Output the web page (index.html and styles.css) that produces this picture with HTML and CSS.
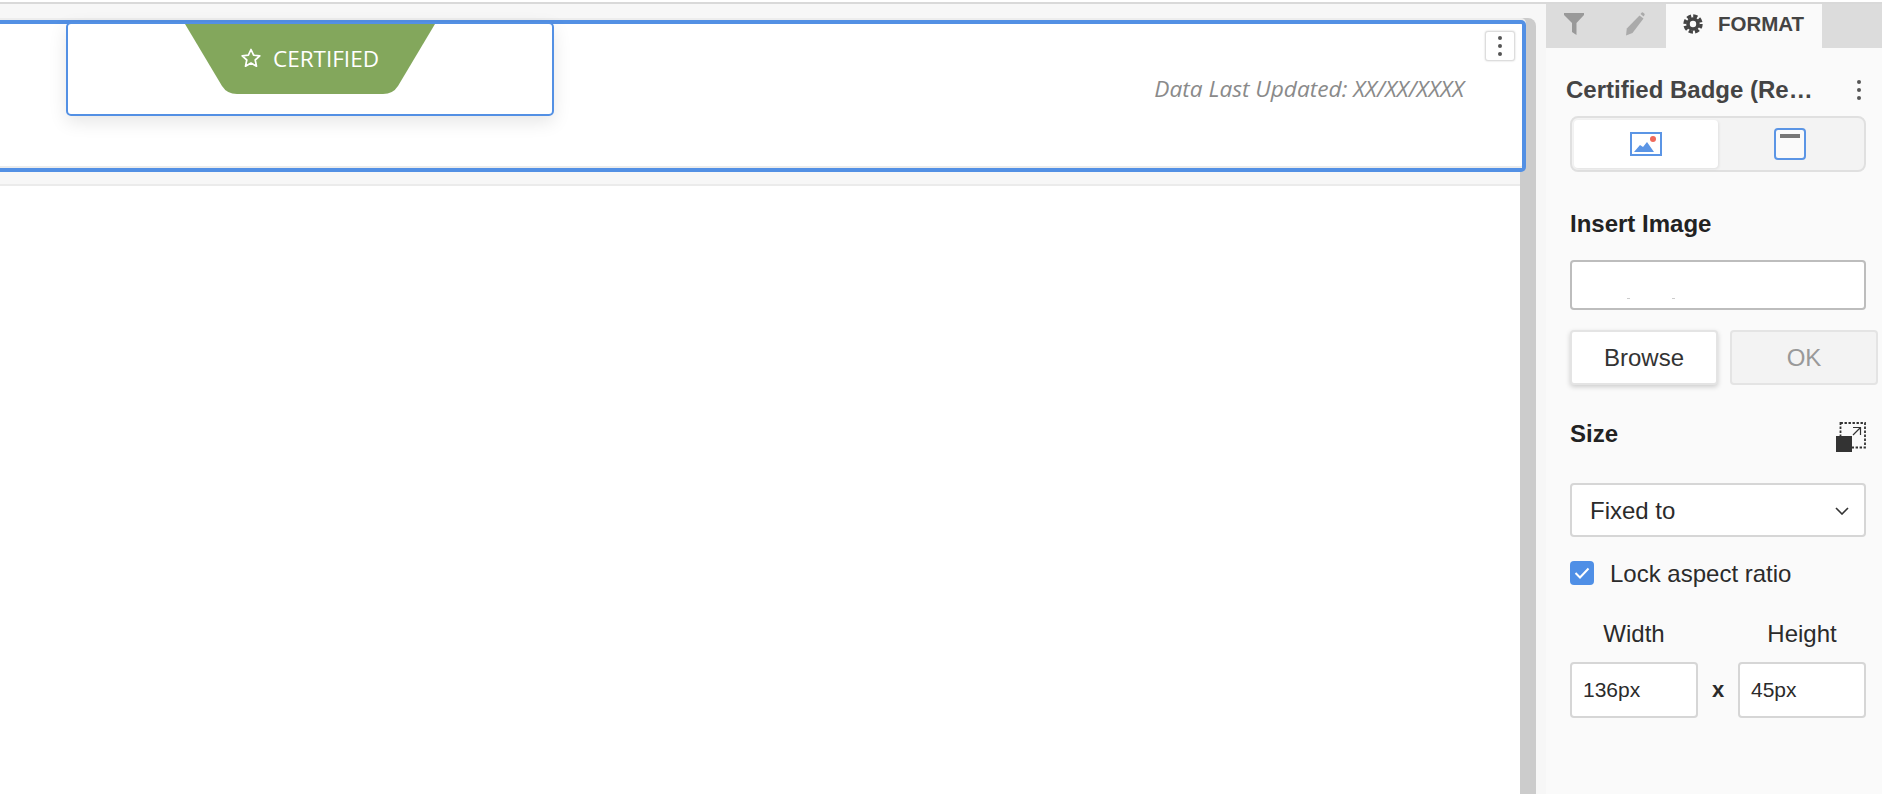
FILE: index.html
```html
<!DOCTYPE html>
<html lang="en">
<head>
    <meta charset="UTF-8">
    <meta name="viewport" content="width=device-width, initial-scale=1.0">
    <title>Certified Badge</title>
    <link rel="stylesheet" href="styles.css">
</head>
<body>
    <div class="app">
        <div class="canvas">
            <div class="page">
                <div class="section">
                    <div class="widget">
                        <div class="badge">
                            <svg class="badge-shape" width="250" height="70" viewBox="0 0 250 70">
                                <path d="M0 0H250L213 62Q208 70 198 70H52Q42 70 37 62Z" fill="#83a75c"/>
                            </svg>
                            <svg class="star" width="20" height="20" viewBox="0 0 20 20">
                                <path d="M10 1.5L12.6 7.2L18.8 7.9L14.2 12L15.5 18.2L10 15L4.5 18.2L5.8 12L1.2 7.9L7.4 7.2Z" fill="none" stroke="#fff" stroke-width="1.7" stroke-linejoin="round"/>
                            </svg>
                            <span class="badge-text">CERTIFIED</span>
                        </div>
                    </div>
                    <span class="updated">Data Last Updated: XX/XX/XXXX</span>
                    <button class="menu-btn">
                        <svg width="6" height="22" viewBox="0 0 6 22"><circle cx="3" cy="3" r="2" fill="#555"/><circle cx="3" cy="11" r="2" fill="#555"/><circle cx="3" cy="19" r="2" fill="#555"/></svg>
                    </button>
                </div>
                <div class="band"></div>
            </div>
            <div class="scrollbar"></div>
        </div>

        <div class="panel">
            <div class="tabs">
                <div class="tab tab-filter">
                    <svg width="20" height="22" viewBox="0 0 20 22"><path d="M0 0H20V2L12.5 10V22L8 19V10L0 2Z" fill="#999"/></svg>
                </div>
                <div class="tab">
                    <svg width="20" height="24" viewBox="0 0 20 24"><path d="M14.5 3.5L18.5 6.5L7.5 21L1 23.5L1.8 16.5Z" fill="#aaa"/><path d="M15.5 2L16.5 0.8Q17.2 0 18 0.6L19.5 1.8Q20 2.5 19.4 3.2L18.6 4.6Z" fill="#aaa"/></svg>
                </div>
                <div class="tab tab-active">
                    <svg width="20" height="20" viewBox="0 0 20 20"><circle cx="10" cy="10" r="5" fill="none" stroke="#444" stroke-width="3.6"/><circle cx="10" cy="10" r="8" fill="none" stroke="#444" stroke-width="3.4" stroke-dasharray="4.2 2.08"/></svg>
                    <span>FORMAT</span>
                </div>
                <div class="tab-rest"></div>
            </div>

            <div class="panel-body">
                <div class="title-row">
                    <span class="title">Certified Badge (Re…</span>
                    <svg width="6" height="22" viewBox="0 0 6 22"><circle cx="3" cy="3" r="2" fill="#555"/><circle cx="3" cy="11" r="2" fill="#555"/><circle cx="3" cy="19" r="2" fill="#555"/></svg>
                </div>

                <div class="segments">
                    <div class="segment segment-active">
                        <svg width="32" height="24" viewBox="0 0 32 24">
                            <rect x="1" y="1" width="30" height="22" fill="#fff" stroke="#5b95e5" stroke-width="2"/>
                            <path d="M4 20L10 13L13 15L17 10L24 20Z" fill="#5b95e5"/>
                            <circle cx="23" cy="7" r="3" fill="#f0695a"/>
                        </svg>
                    </div>
                    <div class="segment">
                        <svg width="32" height="32" viewBox="0 0 32 32">
                            <rect x="1" y="1" width="30" height="30" rx="3" fill="#fafafa" stroke="#5b95e5" stroke-width="2"/>
                            <rect x="6" y="6" width="20" height="4" fill="#777"/>
                        </svg>
                    </div>
                </div>

                <h3 class="heading heading-image">Insert Image</h3>
                <div class="input-box image-input"></div>
                <div class="btn-row">
                    <button class="btn">Browse</button>
                    <button class="btn btn-disabled">OK</button>
                </div>

                <div class="size-row">
                    <h3 class="heading">Size</h3>
                    <svg width="30" height="30" viewBox="0 0 30 30">
                        <rect x="4.5" y="1" width="24.5" height="24.5" fill="none" stroke="#333" stroke-width="1.8" stroke-dasharray="2.4 1.6"/>
                        <path d="M17 5.5H24.5V13M24.5 5.5L17 13" fill="none" stroke="#333" stroke-width="1.2"/>
                        <rect x="0" y="14" width="16" height="16" fill="#333"/>
                    </svg>
                </div>

                <div class="input-box select-box">
                    <span>Fixed to</span>
                    <svg width="14" height="8" viewBox="0 0 14 8"><path d="M1 1L7 7L13 1" fill="none" stroke="#333" stroke-width="1.6"/></svg>
                </div>

                <div class="check-row">
                    <span class="checkbox">
                        <svg width="16" height="12" viewBox="0 0 16 12"><path d="M1.5 6L6 10.5L14.5 1.5" fill="none" stroke="#fff" stroke-width="2"/></svg>
                    </span>
                    <span class="check-label">Lock aspect ratio</span>
                </div>

                <div class="dims-labels">
                    <span>Width</span>
                    <span>Height</span>
                </div>
                <div class="dims">
                    <div class="input-box dim-input">136px</div>
                    <span class="dim-x">x</span>
                    <div class="input-box dim-input">45px</div>
                </div>
            </div>
        </div>
    </div>
</body>
</html>
```

FILE: styles.css
```css
* {
    box-sizing: border-box;
}
body {
    margin: 0;
    height: 794px;
    overflow: hidden;
    background: #fff;
    font-family: "Liberation Sans", Arial, sans-serif;
    color: #2b2b2b;
}
.app {
    display: flex;
    height: 792px;
    margin-top: 2px;
    border-top: 2px solid #d9d9d9;
    background: #f7f7f7;
}
.canvas {
    display: flex;
    flex: 0 0 1546px;
    padding: 14px 10px 0 0;
}
.page {
    width: 1520px;
    padding-top: 2px;
    background: #fff;
    display: flex;
    flex-direction: column;
}
.section {
    position: relative;
    z-index: 1;
    width: 1526px;
    height: 152px;
    border: 4px solid #5390e4;
    border-left: none;
    border-radius: 0 5px 5px 0;
    background: #fff;
    box-shadow: inset 0 -2px 0 #ececec, 0 -2px 0 #ededed;
    display: flex;
    justify-content: flex-end;
    padding: 50px 58px 0 0;
}
.band {
    height: 14px;
    background: #f7f7f7;
    border-bottom: 2px solid #ebebeb;
}
.scrollbar {
    width: 16px;
    background: #cccccc;
    border-radius: 0 8px 0 0;
}

.widget {
    position: absolute;
    left: 66px;
    top: -2px;
    width: 488px;
    height: 94px;
    border: 2px solid #5390e4;
    border-radius: 5px;
    background: #fff;
    box-shadow: 0 6px 18px rgba(0, 0, 0, 0.1);
    display: flex;
    justify-content: center;
}
.badge {
    position: relative;
    width: 250px;
    height: 70px;
    padding-bottom: 2px;
    display: flex;
    align-items: center;
    justify-content: center;
    gap: 12px;
}
.badge-shape {
    position: absolute;
    left: 0;
    top: 0;
}
.star {
    position: relative;
}
.badge-text {
    position: relative;
    font-family: "Open Sans", sans-serif;
    font-size: 22.5px;
    color: #fff;
}
.updated {
    font-family: "Open Sans", sans-serif;
    font-style: italic;
    font-size: 22.7px;
    line-height: 30px;
    color: #8a8a8a;
}
.menu-btn {
    position: absolute;
    right: 7px;
    top: 7px;
    width: 30px;
    height: 30px;
    padding: 0;
    border: 1px solid #ddd;
    border-radius: 3px;
    background: #fff;
    box-shadow: 0 0 2px rgba(0, 0, 0, 0.2);
    display: flex;
    align-items: center;
    justify-content: center;
}

.panel {
    flex: 1;
    background: #fafafa;
    display: flex;
    flex-direction: column;
}
.tabs {
    display: flex;
    height: 44px;
    background: #dcdcdc;
}
.tab {
    width: 58px;
    margin-right: 2px;
    display: flex;
    align-items: center;
    justify-content: center;
    padding-bottom: 4px;
}
.tab-filter {
    padding-right: 2px;
}
.tab-active {
    width: 156px;
    margin: 0;
    background: #fafafa;
    gap: 15px;
    padding-right: 1px;
    font-size: 20.5px;
    font-weight: bold;
    color: #444;
}
.tab-rest {
    flex: 1;
}
.panel-body {
    padding: 0 4px 0 24px;
}
.title-row {
    width: 296px;
    height: 68px;
    padding: 16px 0 0;
    margin-left: -4px;
    display: flex;
    justify-content: space-between;
    align-items: center;
}
.title {
    font-size: 24px;
    font-weight: bold;
    color: #444;
}
.segments {
    width: 296px;
    height: 56px;
    padding: 2px;
    background: #f3f3f3;
    border: 2px solid #e0e0e0;
    border-radius: 8px;
    display: flex;
}
.segment {
    flex: 1;
    display: flex;
    align-items: center;
    justify-content: center;
}
.segment-active {
    background: #fff;
    border-radius: 4px;
    box-shadow: 1px 1px 3px rgba(0, 0, 0, 0.08);
}
.heading {
    margin: 0;
    font-size: 24px;
    font-weight: bold;
    color: #222;
}
.heading-image {
    margin-top: 40px;
    line-height: 24px;
}
.input-box {
    border: 2px solid #d6d6d6;
    border-radius: 4px;
    background: #fff;
    font-size: 24px;
}
.image-input {
    width: 296px;
    height: 50px;
    margin-top: 24px;
    border-color: #bdbdbd;
    /* stray specks left over in the field */
    background-image: linear-gradient(#ccc, #ccc), linear-gradient(#ccc, #ccc);
    background-size: 3px 1px;
    background-repeat: no-repeat;
    background-position: 55px 36px, 100px 36px;
}
.btn-row {
    display: flex;
    gap: 12px;
    margin-top: 20px;
}
.btn {
    width: 148px;
    height: 55px;
    padding: 0;
    border: 2px solid #e4e4e4;
    border-radius: 4px;
    background: #fff;
    box-shadow: 0 2px 5px rgba(0, 0, 0, 0.18);
    font-family: inherit;
    font-size: 24px;
    color: #333;
}
.btn-disabled {
    background: #f3f3f3;
    box-shadow: none;
    color: #999;
}
.size-row {
    width: 296px;
    height: 30px;
    margin-top: 37px;
    display: flex;
    justify-content: space-between;
    align-items: center;
}
.size-row .heading {
    margin-top: -7px;
}
.select-box {
    width: 296px;
    height: 54px;
    margin-top: 31px;
    padding: 2px 15px 0 18px;
    display: flex;
    align-items: center;
    justify-content: space-between;
}
.check-row {
    display: flex;
    align-items: center;
    gap: 16px;
    margin-top: 24px;
    height: 24px;
    font-size: 24px;
}
.check-label {
    padding-top: 1px;
}
.checkbox {
    width: 24px;
    height: 24px;
    border-radius: 4px;
    background: #4f8fe6;
    display: flex;
    align-items: center;
    justify-content: center;
}
.dims-labels {
    width: 296px;
    margin-top: 37px;
    display: flex;
    font-size: 24px;
    line-height: 24px;
}
.dims-labels span {
    width: 128px;
    text-align: center;
}
.dims-labels span:last-child {
    margin-left: 40px;
}
.dims {
    width: 296px;
    margin-top: 16px;
    display: flex;
    align-items: center;
}
.dim-input {
    width: 128px;
    height: 56px;
    padding: 1px 0 0 11px;
    line-height: 50px;
    font-size: 21px;
}
.dim-x {
    width: 40px;
    text-align: center;
    font-weight: bold;
    font-size: 22px;
}
```
